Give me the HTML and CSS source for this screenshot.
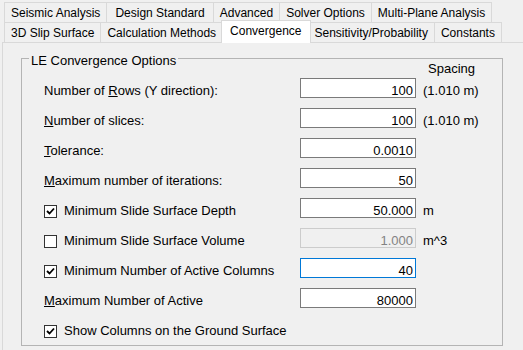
FILE: index.html
```html
<!DOCTYPE html>
<html lang="en">
<head>
    <meta charset="UTF-8">
    <title>Convergence Options</title>
    <link rel="stylesheet" href="styles.css">
</head>
<body>
    <div class="tabstrip">
        <div class="tab-row">
            <div class="tab">Seismic Analysis</div>
            <div class="tab tab-wide">Design Standard</div>
            <div class="tab">Advanced</div>
            <div class="tab">Solver Options</div>
            <div class="tab">Multi-Plane Analysis</div>
        </div>
        <div class="tab-row">
            <div class="tab">3D Slip Surface</div>
            <div class="tab">Calculation Methods</div>
            <div class="tab tab-active">Convergence</div>
            <div class="tab">Sensitivity/Probability</div>
            <div class="tab">Constants</div>
        </div>
    </div>

    <div class="panel">
        <fieldset class="group">
            <legend>LE Convergence Options</legend>
            <div class="rows">
                <div class="row row-head">Spacing</div>

                <div class="row">
                    <label class="lbl">Number of <u>R</u>ows (Y direction):</label>
                    <input class="field" type="text" value="100">
                    <span class="unit">(1.010 m)</span>
                </div>
                <div class="row">
                    <label class="lbl"><u>N</u>umber of slices:</label>
                    <input class="field" type="text" value="100">
                    <span class="unit">(1.010 m)</span>
                </div>
                <div class="row">
                    <label class="lbl"><u>T</u>olerance:</label>
                    <input class="field" type="text" value="0.0010">
                </div>
                <div class="row">
                    <label class="lbl"><u>M</u>aximum number of iterations:</label>
                    <input class="field" type="text" value="50">
                </div>
                <div class="row">
                    <label class="lbl"><span class="box"><svg viewBox="0 0 11 11" width="11" height="11"><polyline points="2,5 4.5,7.5 9,2.5" /></svg></span>Minimum Slide Surface Depth</label>
                    <input class="field" type="text" value="50.000">
                    <span class="unit">m</span>
                </div>
                <div class="row">
                    <label class="lbl"><span class="box"></span>Minimum Slide Surface Volume</label>
                    <input class="field" type="text" value="1.000" disabled>
                    <span class="unit">m^3</span>
                </div>
                <div class="row">
                    <label class="lbl"><span class="box"><svg viewBox="0 0 11 11" width="11" height="11"><polyline points="2,5 4.5,7.5 9,2.5" /></svg></span>Minimum Number of Active Columns</label>
                    <input class="field field-focus" type="text" value="40">
                </div>
                <div class="row">
                    <label class="lbl"><u>M</u>aximum Number of Active</label>
                    <input class="field" type="text" value="80000">
                </div>
                <div class="row row-plain">
                    <label class="lbl lbl-full"><span class="box"><svg viewBox="0 0 11 11" width="11" height="11"><polyline points="2,5 4.5,7.5 9,2.5" /></svg></span>Show Columns on the Ground Surface</label>
                </div>
            </div>
        </fieldset>
    </div>
</body>
</html>
```

FILE: styles.css
```css
body {
    margin: 0;
    padding-top: 2px;
    height: 348px;
    overflow: hidden;
    background-color: #f0f0f0;
    font-family: "Liberation Sans", Arial, sans-serif;
    font-size: 13px;
    color: #000;
}

/* tab strip */
.tab-row {
    display: flex;
    height: 20px;
    padding-left: 4px;
}
.tab {
    box-sizing: border-box;
    height: 20px;
    padding: 2px 6px 0;
    line-height: 17px;
    font-size: 12px;
    white-space: nowrap;
    background: #f0f0f0;
    border: 1px solid #d9d9d9;
    border-bottom: none;
}
.tab + .tab {
    margin-left: -1px;
}
.tab-row .tab-wide {
    padding: 2px 8px 0;
}
.tab-row .tab-active {
    position: relative;
    z-index: 2;
    height: 23px;
    margin: -2px -2px 0;
    padding: 2px 8px 0;
    background: #fff;
}

/* page */
.panel {
    margin-left: 2px;
    height: 306px;
    padding: 6px 0 0 18px;
    border-top: 1px solid #d9d9d9;
    border-left: 1px solid #d9d9d9;
}
.group {
    box-sizing: border-box;
    width: 482px;
    margin: 0;
    padding: 0 0 7px;
    border: 1px solid #b4b4b4;
}
.group legend {
    margin-left: 7px;
    padding: 4px 2px 0;
    line-height: 15px;
}
.rows {
    padding-left: 22px;
}
.row {
    display: flex;
    align-items: baseline;
    height: 20px;
    margin-top: 10px;
}
.row-head {
    display: block;
    height: 15px;
    line-height: 15px;
    margin-top: -7px;
    padding-left: 384px;
}
.row-head + .row {
    margin-top: 2px;
}
.row-plain {
    padding-top: 5px;
    height: 15px;
}
.lbl {
    flex: none;
    width: 256px;
    line-height: 15px;
    white-space: nowrap;
}
.lbl-full {
    width: auto;
}
.field {
    box-sizing: border-box;
    width: 116px;
    height: 20px;
    margin: 0;
    padding: 4px 2px 0;
    border: 1px solid #7a7a7a;
    border-radius: 0;
    background: #fff;
    font-family: inherit;
    font-size: 13px;
    color: #000;
    text-align: right;
    outline: none;
}
.field:disabled {
    border-color: #cccccc;
    background: #f0f0f0;
    color: #838383;
}
.field-focus {
    border-color: #0078d7;
}
.unit {
    padding-left: 7px;
    line-height: 15px;
    white-space: nowrap;
}

/* check boxes */
.box {
    display: inline-block;
    box-sizing: border-box;
    width: 13px;
    height: 13px;
    margin-right: 7px;
    vertical-align: -3px;
    border: 1px solid #333;
    background: #fff;
}
.box svg {
    display: block;
}
.box polyline {
    fill: none;
    stroke: #000;
    stroke-width: 1.8;
}
```
